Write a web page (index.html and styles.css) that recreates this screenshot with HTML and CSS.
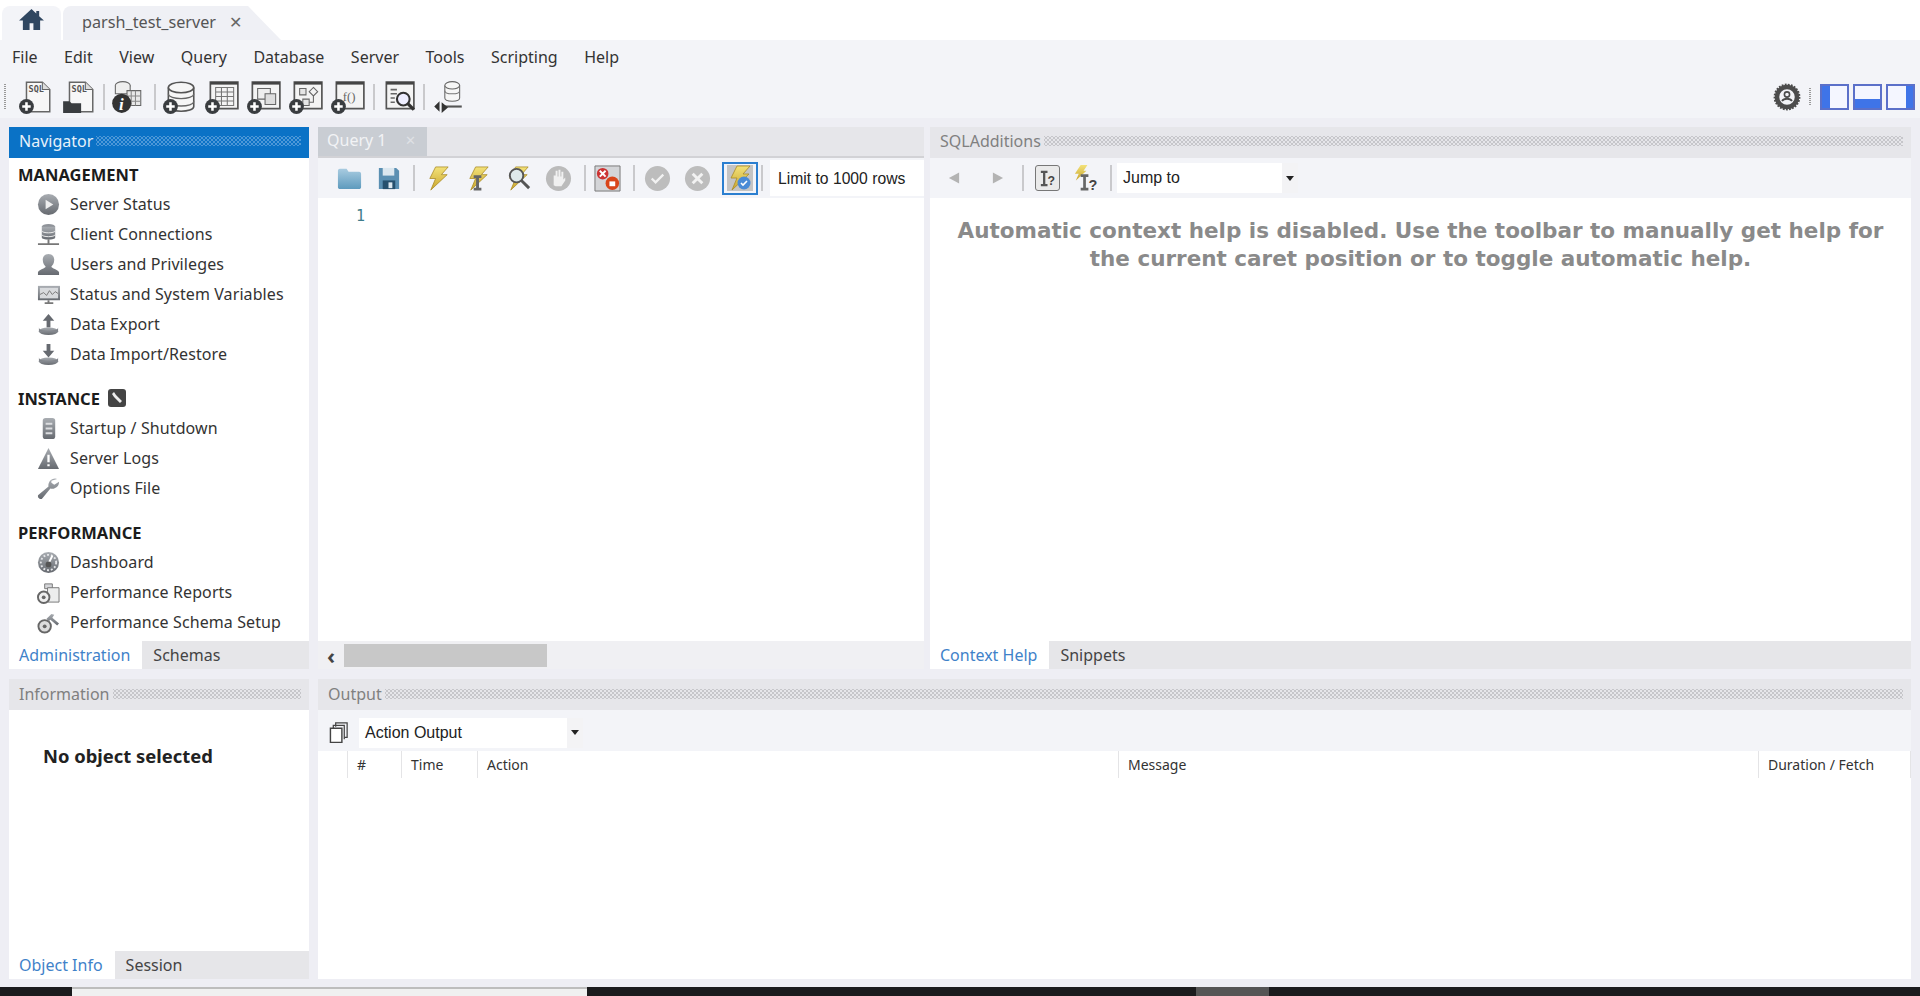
FILE: index.html
```html
<!DOCTYPE html>
<html lang="en">
<head>
<meta charset="utf-8">
<title>MySQL Workbench</title>
<link rel="stylesheet" href="styles.css">
</head>
<body>
<svg class="defs" aria-hidden="true">
  <defs>
    <linearGradient id="g" x1="0" y1="0" x2="0" y2="1"><stop offset="0" stop-color="#a9adb2"/><stop offset="1" stop-color="#666a70"/></linearGradient>
    <linearGradient id="bolt" x1="0" y1="0" x2="0" y2="1"><stop offset="0" stop-color="#f3e27a"/><stop offset="1" stop-color="#c9a52c"/></linearGradient>
    <linearGradient id="folder" x1="0" y1="0" x2="0" y2="1"><stop offset="0" stop-color="#a8cbe0"/><stop offset="1" stop-color="#5d9abd"/></linearGradient>
    <symbol id="plus" viewBox="0 0 34 34"><circle cx="8" cy="26" r="7" fill="#3a3d40"/><path d="M4 26h8M8 22v8" stroke="#fff" stroke-width="2.4"/></symbol>
    <symbol id="win" viewBox="0 0 34 34"><path d="M6 3h26v25H6z" fill="#f4f4f4" stroke="#555" stroke-width="1.6"/><path d="M6 4h26" stroke="#444" stroke-width="2.6"/></symbol>
    <symbol id="bolt-shape" viewBox="0 0 28 28"><path d="M11 2h13l-7 8h6L6 26l5-12H5z" fill="url(#bolt)" stroke="#a98a25" stroke-width=".8"/></symbol>
  </defs>
</svg>

<header class="tabbar">
  <div class="home-tab">
    <svg class="home-icon" viewBox="0 0 28 24"><path d="M14 1 1 13h4v10h7v-7h4v7h7V13h4l-5-4.5V3h-3v2.8z" fill="#304761"/></svg>
  </div>
  <div class="conn-tab"><span>parsh_test_server</span><span class="conn-close">✕</span></div>
</header>

<nav class="menubar">
  <span>File</span><span>Edit</span><span>View</span><span>Query</span><span>Database</span><span>Server</span><span>Tools</span><span>Scripting</span><span>Help</span>
</nav>

<div class="toolbar">
  <i class="grip"></i>
  <span class="tool first">
    <svg viewBox="0 0 34 34"><path d="M8 3h15l7 7v21H8z" fill="#f7f7f7" stroke="#666" stroke-width="1.4"/><path d="M23 3v7h7" fill="#ddd" stroke="#666"/><text x="10" y="12" class="svg-sql">SQL</text><use href="#plus"/></svg>
  </span>
  <span class="tool m1">
    <svg viewBox="0 0 34 34"><path d="M8 3h15l7 7v21H8z" fill="#f7f7f7" stroke="#666" stroke-width="1.4"/><path d="M23 3v7h7" fill="#ddd" stroke="#666"/><text x="10" y="12" class="svg-sql">SQL</text><path d="M2 32V21h6l2 2h9v9z" fill="#3a3d40"/></svg>
  </span>
  <i class="sep m3"></i>
  <span class="tool m1">
    <svg viewBox="0 0 34 34"><ellipse cx="13" cy="6" rx="7" ry="3.5" fill="#eee" stroke="#666"/><path d="M6 6v8h14V6" fill="#eee" stroke="#666"/><path d="M17 11h13v14H17z" fill="#e8e8e8" stroke="#666"/><path d="M21 11v14M25 11v14M17 16h13M17 21h13" stroke="#888"/><circle cx="12" cy="23" r="9" fill="#333"/><text x="9.5" y="29" class="svg-i">i</text></svg>
  </span>
  <i class="sep m6"></i>
  <span class="tool m3">
    <svg viewBox="0 0 34 34"><path d="M6 8v18c0 6 24 6 24 0V8" fill="#f6f6f6" stroke="#555" stroke-width="1.5"/><ellipse cx="18" cy="8" rx="12" ry="5" fill="#f6f6f6" stroke="#555" stroke-width="1.5"/><path d="M6 14c0 6 24 6 24 0M6 21c0 6 24 6 24 0" fill="none" stroke="#666" stroke-width="1.2"/><use href="#plus"/></svg>
  </span>
  <span class="tool">
    <svg viewBox="0 0 34 34"><use href="#win"/><path d="M11 8h17v17H11zM11 12.200h17M11 16.500h17M11 20.700h17M16.500 8v17M22 8v17" fill="none" stroke="#777"/><use href="#plus"/></svg>
  </span>
  <span class="tool">
    <svg viewBox="0 0 34 34"><use href="#win"/><path d="M11 9h12v10H11z" fill="#eee" stroke="#666"/><path d="M18 14h10v10H18z" fill="#ddd" stroke="#666"/><use href="#plus"/></svg>
  </span>
  <span class="tool">
    <svg viewBox="0 0 34 34"><use href="#win"/><path d="M11 9h6v6h-6zM14 19h6v6h-6z" fill="#e6e6e6" stroke="#666"/><path d="m24 8 4 4-4 4-4-4zM24 16v6h-4" fill="none" stroke="#666"/><use href="#plus"/></svg>
  </span>
  <span class="tool">
    <svg viewBox="0 0 34 34"><use href="#win"/><text x="12" y="21" class="svg-fn">f()</text><use href="#plus"/></svg>
  </span>
  <i class="sep m4"></i>
  <span class="tool m2">
    <svg viewBox="0 0 34 34"><use href="#win"/><path d="M10 10h6M10 14h6M10 18h4M10 22h4" stroke="#666" stroke-width="1.5"/><circle cx="22" cy="19" r="6" fill="#eef" stroke="#333" stroke-width="2"/><path d="m26 23 6 6" stroke="#333" stroke-width="3"/></svg>
  </span>
  <i class="sep m4"></i>
  <span class="tool m2">
    <svg viewBox="0 0 34 34"><path d="M14 6v12c0 4 14 4 14 0V6" fill="#f6f6f6" stroke="#666"/><ellipse cx="21" cy="6" rx="7" ry="3.500" fill="#f6f6f6" stroke="#666"/><path d="M14 11c0 4 14 4 14 0" fill="none" stroke="#777"/><path d="M14 26h16" stroke="#555" stroke-width="2"/><path d="m9 21-5 5 5 5zM11 22l6 5-6 5z" fill="#333"/></svg>
  </span>
  <div class="toolbar-right">
    <svg class="gear" viewBox="0 0 28 28"><circle cx="14" cy="14" r="10" fill="none" stroke="#4c4c4c" stroke-width="4.500"/><circle cx="14" cy="14" r="12.400" fill="none" stroke="#4c4c4c" stroke-width="2" stroke-dasharray="1.800 1.300"/><circle cx="14" cy="11.500" r="2.600" fill="none" stroke="#4c4c4c" stroke-width="1.600"/><path d="M9 18c2-3 8-3 10 0" fill="none" stroke="#4c4c4c" stroke-width="1.800"/></svg>
    <i class="grip small"></i>
    <span class="pane pane-left"></span><span class="pane pane-bottom"></span><span class="pane pane-right"></span>
  </div>
</div>

<main class="workspace">
  <section class="panel nav-panel">
    <h2 class="panel-head active"><span>Navigator</span><i class="dots"></i></h2>
    <div class="nav-body">
      <h3 class="nav-title">MANAGEMENT</h3>
      <ul class="nav-list">
        <li><svg viewBox="0 0 24 24"><circle cx="12" cy="12" r="11" fill="url(#g)"/><path d="M9 7v10l8-5z" fill="#eee"/></svg>Server Status</li>
        <li><svg viewBox="0 0 24 24"><ellipse cx="12" cy="4" rx="7" ry="3" fill="#8f9399"/><path d="M5 4v11c0 3 14 3 14 0V4" fill="url(#g)"/><path d="M5 8c0 3 14 3 14 0M5 12c0 3 14 3 14 0" fill="none" stroke="#eee"/><path d="M1 22h22M12 17v5" stroke="#777" stroke-width="2"/></svg>Client Connections</li>
        <li><svg viewBox="0 0 24 24"><path d="M12 1c4 0 6 3 6 6 0 4-2 6-3 7 0 2 7 3 8 6v3H1v-3c1-3 8-4 8-6-1-1-3-3-3-7 0-3 2-6 6-6z" fill="url(#g)"/></svg>Users and Privileges</li>
        <li><svg viewBox="0 0 24 24"><path d="M1 3h23v15H1z" fill="url(#g)"/><path d="M3 5h19v11H3z" fill="#d8dadd"/><path d="m3 12 4-2 3 3 3-5 3 4 3-3 3 2" fill="none" stroke="#777"/><path d="M8 21h9M12 18v3" stroke="#777" stroke-width="2"/></svg>Status and System Variables</li>
        <li><svg viewBox="0 0 24 24"><path d="M12 1 6 8h4v7h4V8h4z" fill="#666a70"/><ellipse cx="12" cy="19" rx="10" ry="4" fill="url(#g)"/><path d="M2 15v4h20v-4c0 5-20 5-20 0z" fill="#80848a"/></svg>Data Export</li>
        <li><svg viewBox="0 0 24 24"><path d="M12 15 6 8h4V1h4v7h4z" fill="#666a70"/><ellipse cx="12" cy="19" rx="10" ry="4" fill="url(#g)"/><path d="M2 15v4h20v-4c0 5-20 5-20 0z" fill="#80848a"/></svg>Data Import/Restore</li>
      </ul>
      <h3 class="nav-title">INSTANCE <svg class="title-icon" viewBox="0 0 18 18"><rect width="18" height="18" rx="3" fill="#444"/><path d="M4 5l2-2 2 3 6 6-2 2-6-6z" fill="#eee"/></svg></h3>
      <ul class="nav-list">
        <li><svg viewBox="0 0 24 24"><rect x="6" y="1" width="13" height="22" rx="3" fill="url(#g)"/><path d="M9 7h7M9 12h7M9 17h7" stroke="#dcdde0" stroke-width="2"/></svg>Startup / Shutdown</li>
        <li><svg viewBox="0 0 24 24"><path d="M12 1 23 23H1z" fill="url(#g)"/><path d="M12 8v8M12 18v2" stroke="#fff" stroke-width="2.400"/></svg>Server Logs</li>
        <li><svg viewBox="0 0 24 24"><path d="M21 2a7 7 0 0 0-9 8L1 19v2l2 2h2l9-11a7 7 0 0 0 9-7l-5 3-3-2v-2z" fill="url(#g)"/></svg>Options File</li>
      </ul>
      <h3 class="nav-title">PERFORMANCE</h3>
      <ul class="nav-list">
        <li><svg viewBox="0 0 24 24"><circle cx="12" cy="12" r="11" fill="url(#g)"/><circle cx="12" cy="12" r="8" fill="none" stroke="#e4e5e8" stroke-width="2" stroke-dasharray="2 2"/><path d="M12 13 16 5" stroke="#fff" stroke-width="2"/><circle cx="12" cy="14" r="3" fill="#555"/></svg>Dashboard</li>
        <li><svg viewBox="0 0 24 24"><path d="M8 3h8v5H8z" fill="#d5d6d9" stroke="#777"/><path d="M11 7h12v15H11z" fill="#eceded" stroke="#777"/><circle cx="7" cy="17" r="6" fill="#eee" stroke="#666" stroke-width="2"/><circle cx="7" cy="17" r="2" fill="#666"/></svg>Performance Reports</li>
        <li><svg viewBox="0 0 24 24"><circle cx="8" cy="16" r="6.500" fill="#ddd" stroke="#666" stroke-width="2"/><circle cx="8" cy="16" r="2" fill="#666"/><path d="m10 8 5-5 3 1-2 3 7 6-2 2-7-6-2 2z" fill="url(#g)"/></svg>Performance Schema Setup</li>
      </ul>
    </div>
    <div class="bottom-tabs"><span class="tab-on">Administration</span><span class="tab-off">Schemas</span></div>
  </section>

  <section class="panel query-panel">
    <div class="query-tabs"><span class="query-tab">Query 1<b>✕</b></span></div>
    <div class="query-tools">
      <span class="qt first-q"><svg viewBox="0 0 28 28"><path d="M2 6c0-1 1-2 2-2h7l2 3h11c1 0 2 1 2 2v14c0 1-1 2-2 2H4c-1 0-2-1-2-2z" fill="url(#folder)"/></svg></span>
      <span class="qt"><svg viewBox="0 0 28 28"><path d="M4 3h18l3 3v19H4z" fill="#5a8fb2"/><path d="M8 3h12v8H8z" fill="#dbe7ef"/><path d="M8 16h13v9H8z" fill="#26506e"/><path d="M14 18h4v6h-4z" fill="#dbe7ef"/></svg></span>
      <i class="sep m5"></i>
      <span class="qt m3"><svg viewBox="0 0 28 28"><use href="#bolt-shape"/></svg></span>
      <span class="qt"><svg viewBox="0 0 28 28"><use href="#bolt-shape"/><path d="M9 12h8M9 25h8M13 12v13" stroke="#666" stroke-width="3"/></svg></span>
      <span class="qt"><svg viewBox="0 0 28 28"><use href="#bolt-shape"/><circle cx="12" cy="11" r="7" fill="#dfe9ea" stroke="#555" stroke-width="2"/><path d="m17 16 8 8" stroke="#555" stroke-width="3"/></svg></span>
      <span class="qt"><svg viewBox="0 0 28 28"><circle cx="14" cy="14" r="13" fill="#bbb"/><path d="M9 21V11h2V6h2v6h1V5h2v7h1V7h2v8l2-2v3l-4 6H11z" fill="#f0f0f0"/></svg></span>
      <i class="sep m6"></i>
      <span class="qt m1"><svg viewBox="0 0 28 28"><path d="M1 1h26v26H1z" fill="#d4d5d8" stroke="#777"/><circle cx="9" cy="9" r="6" fill="#c33"/><path d="m6 6 6 6m0-6-6 6" stroke="#fff" stroke-width="2"/><circle cx="19" cy="19" r="7" fill="#d9451a"/><path d="M16 22v-5h6v5z" fill="#fff"/></svg></span>
      <i class="sep m6"></i>
      <span class="qt m2"><svg viewBox="0 0 28 28"><circle cx="14" cy="14" r="13" fill="#bdbdbd"/><path d="m8 14 4 4 8-8" fill="none" stroke="#f2f2f2" stroke-width="2.400"/></svg></span>
      <span class="qt"><svg viewBox="0 0 28 28"><circle cx="14" cy="14" r="13" fill="#bdbdbd"/><path d="m9 9 10 10m0-10L9 19" stroke="#f2f2f2" stroke-width="3"/></svg></span>
      <span class="qt-on"><svg viewBox="0 0 28 28"><path d="M1 1h26v26H1z" fill="#c4c4c4"/><use href="#bolt-shape"/><circle cx="18" cy="19" r="6.500" fill="#4a8bd6"/><path d="m15 19 2 2 4-4" fill="none" stroke="#fff" stroke-width="1.600"/></svg></span>
      <i class="sep m3"></i>
      <span class="limit">Limit to 1000 rows</span>
    </div>
    <div class="editor"><span class="lineno">1</span></div>
    <div class="hscroll"><span class="hscroll-arrow">‹</span><span class="hscroll-thumb"></span></div>
  </section>

  <section class="panel add-panel">
    <h2 class="panel-head"><span>SQLAdditions</span><i class="dots"></i></h2>
    <div class="add-tools">
      <svg class="arrow" viewBox="0 0 14 14"><path d="M12 1v12L1 7z" fill="#b3b3b3"/></svg>
      <svg class="arrow gap-arrow" viewBox="0 0 14 14"><path d="M2 1v12l11-6z" fill="#b3b3b3"/></svg>
      <i class="sep m-sep"></i>
      <span class="help-on"><svg viewBox="0 0 20 20"><path d="M3 3h7M3 17h7M6.500 3v14" stroke="#555" stroke-width="2.400"/><text x="10" y="17" class="svg-q">?</text></svg></span>
      <span class="help-off"><svg viewBox="0 0 28 28"><path d="M9 0h7l-4 6h3L4 16l3-7H3z" fill="url(#bolt)"/><path d="M9 11h8M9 25h8M13 11v14" stroke="#666" stroke-width="2.800"/><text x="17" y="26" class="svg-q2">?</text></svg></span>
      <i class="sep m-sep2"></i>
      <div class="combo jump"><span>Jump to</span><i class="combo-btn"></i></div>
    </div>
    <div class="help-body"><p>Automatic context help is disabled. Use the toolbar to manually get help for<br>the current caret position or to toggle automatic help.</p></div>
    <div class="bottom-tabs"><span class="tab-on">Context Help</span><span class="tab-off">Snippets</span></div>
  </section>

  <section class="panel info-panel">
    <h2 class="panel-head"><span>Information</span><i class="dots"></i></h2>
    <div class="info-body"><p>No object selected</p></div>
    <div class="bottom-tabs"><span class="tab-on">Object Info</span><span class="tab-off">Session</span></div>
  </section>

  <section class="panel output-panel">
    <h2 class="panel-head"><span>Output</span><i class="dots"></i></h2>
    <div class="out-tools">
      <svg class="copy-icon" viewBox="0 0 22 22"><path d="M7 5V1h12v15h-3" fill="none" stroke="#444" stroke-width="1.300"/><path d="M4.500 7V3.500H16V18" fill="none" stroke="#444" stroke-width="1.300"/><path d="M1.500 6.500h12v15h-12z" fill="#fff" stroke="#444" stroke-width="1.500"/></svg>
      <div class="combo action"><span>Action Output</span><i class="combo-btn"></i></div>
    </div>
    <div class="out-head">
      <span class="col c0"></span><span class="col c1">#</span><span class="col c2">Time</span><span class="col c3">Action</span><span class="col c4">Message</span><span class="col c5">Duration / Fetch</span>
    </div>
    <div class="out-body"></div>
  </section>
</main>

<footer class="taskbar"><span class="task-box"></span><span class="task-seg"></span></footer>
</body>
</html>
```

FILE: styles.css
```css
* { box-sizing: border-box; }
html, body { margin: 0; height: 100%; }
body {
  width: 1920px; height: 996px; overflow: hidden;
  display: flex; flex-direction: column;
  font-family: "Noto Sans", "Open Sans", sans-serif;
  font-size: 15px; color: #2a2a2a; background: #fff;
}
.defs { display: block; width: 0; height: 0; }
ul { list-style: none; margin: 0; padding: 0; }
h2, h3, p { margin: 0; }
i { font-style: normal; }

.tabbar { height: 40px; display: flex; align-items: flex-end; padding-left: 2px; background: #fff; flex: none; }
.home-tab { width: 59px; height: 34px; background: #f3f4f8; border-radius: 8px 8px 0 0; display: flex; align-items: center; justify-content: center; }
.home-icon { width: 27px; height: 23px; margin-bottom: 8px; }
.conn-tab {
  width: 218px; height: 34px; margin-left: 2px; padding-left: 19px; padding-bottom: 2px;
  background: #eff0f5; clip-path: polygon(0 0, 185px 0, 100% 100%, 0 100%);
  border-radius: 8px 0 0 0;
  display: flex; align-items: center; gap: 13px; font-size: 16.200px; color: #555;
}
.conn-close { font-size: 16px; color: #666; }

.menubar { height: 36px; flex: none; display: flex; align-items: center; padding: 0 0 2px 12px; background: #f3f4f8; font-size: 16px; color: #333; }
.menubar span { margin-right: 26.500px; }

.toolbar { height: 42px; flex: none; display: flex; align-items: center; padding-left: 4px; background: #f3f4f8; }
.grip { width: 2px; height: 26px; margin-right: 9px; background: repeating-linear-gradient(#999 0 1px, transparent 1px 2px); }
.grip.small { height: 18px; margin: 0 5px 0 4px; }
.tool { width: 42px; height: 36px; display: flex; align-items: center; justify-content: center; }
.tool svg { width: 36px; height: 36px; }
.sep { width: 2px; height: 26px; background: #c9c9cc; flex: none; }
.m1 { margin-left: 1px; } .m2 { margin-left: 2px; } .m3 { margin-left: 3px; }
.m4 { margin-left: 4px; } .m5 { margin-left: 5px; } .m6 { margin-left: 6px; }
.svg-sql { font: bold 8px "DejaVu Sans Mono", monospace; fill: #555; }
.svg-i { font: italic bold 16px "Liberation Serif", serif; fill: #fff; }
.svg-fn { font: 12px "Liberation Serif", serif; fill: #666; }
.svg-q { font: bold 13px "Liberation Sans", sans-serif; fill: #444; }
.svg-q2 { font: bold 15px "Liberation Sans", sans-serif; fill: #444; }
.toolbar-right { margin-left: auto; display: flex; align-items: center; padding-right: 5px; gap: 4px; }
.gear { width: 28px; height: 28px; }
.pane { width: 29px; height: 26px; border: 2px solid #5b70c9; background: #f4f6ff; display: block; }
.pane-left { background: linear-gradient(90deg, #3f74e8 30%, #f4f6ff 30%); }
.pane-bottom { background: linear-gradient(#f4f6ff 60%, #3f74e8 60%); }
.pane-right { background: linear-gradient(90deg, #f4f6ff 70%, #3f74e8 70%); }

.workspace {
  flex: 1; min-height: 0; background: #eeeef4; padding: 9px 9px 8px 9px;
  display: grid; grid-template-columns: 300px 606px 981px; column-gap: 9px; row-gap: 10px;
  grid-template-rows: 542px 300px; grid-template-areas: "nav query add" "info out out";
}
.add-panel { margin-left: -3px; width: 981px; }
.nav-panel { grid-area: nav; }
.query-panel { grid-area: query; }
.add-panel { grid-area: add; }
.info-panel { grid-area: info; }
.output-panel { grid-area: out; width: 1593px; }
.panel { display: flex; flex-direction: column; min-width: 0; min-height: 0; background: #fff; }

.panel-head { height: 31px; flex: none; display: flex; align-items: center; gap: 3px; padding: 0 8px 3px 10px; background: #e6e6ea; font-weight: 400; font-size: 16px; color: #808080; }
.info-panel .panel-head, .output-panel .panel-head { padding-bottom: 1px; }
.panel-head.active { background: #0a72c6; color: #e6f1fa; }
.dots { flex: 1; height: 10px; background-image: radial-gradient(circle, #c6c6ca .8px, transparent 1px), radial-gradient(circle, #c6c6ca .8px, transparent 1px); background-size: 4px 4px; background-position: 0 0, 2px 2px; }
.panel-head.active .dots { background-image: radial-gradient(circle, #4d98d8 .8px, transparent 1px), radial-gradient(circle, #4d98d8 .8px, transparent 1px); }

.nav-body { flex: 1; min-height: 0; padding: 1px 0 0 9px; }
.nav-title { height: 30px; display: flex; align-items: center; gap: 8px; font-size: 16.500px; font-weight: 700; color: #1c1c1c; }
.nav-list { margin-bottom: 14px; }
.nav-list li { height: 30px; display: flex; align-items: center; padding-left: 19px; gap: 10px; font-size: 16px; letter-spacing: .1px; color: #333; }
.nav-list svg { width: 23px; height: 23px; flex: none; }
.title-icon { width: 18px; height: 18px; }

.bottom-tabs { height: 28px; flex: none; display: flex; background: #e6e6e9; font-size: 16px; color: #444; }
.bottom-tabs span { display: flex; align-items: center; }
.tab-on { background: #fff; color: #3f82c9; padding: 0 12px 0 10px; }
.tab-off { padding: 0 11px; }

.query-tabs { height: 31px; flex: none; display: flex; background: #e6e6ea; border-bottom: 2px solid #d2d2d6; }
.query-tab { width: 109px; background: #c9cdd3; color: #f2f3f5; font-size: 16px; padding: 0 0 3px 9px; display: flex; align-items: center; gap: 18px; }
.query-tab b { font-weight: 400; font-size: 13px; color: #dfe1e5; }
.query-tools { height: 40px; flex: none; display: flex; align-items: center; background: #f3f4f8; }
.qt { width: 40px; height: 30px; display: flex; align-items: center; justify-content: center; }
.qt svg { width: 27px; height: 27px; }
.first-q { margin: 0 -1px 0 11px; }
.qt-on { width: 36px; height: 33px; margin-left: 5px; border: 2px solid #2b7fd0; display: flex; align-items: center; justify-content: center; }
.qt-on svg { width: 28px; height: 28px; }
.limit { flex: 1; height: 36px; margin-left: 7px; padding: 2px 0 0 8px; background: #fff; font-family: "Liberation Sans", sans-serif; font-size: 15.700px; display: flex; align-items: center; color: #222; }
.editor { flex: 1; padding: 7px 0 0 38px; background: #fff; }
.lineno { font-family: "DejaVu Sans Mono", monospace; font-size: 15px; color: #3f7d8c; }
.hscroll { height: 28px; flex: none; display: flex; align-items: center; background: #f0f0f3; }
.hscroll-arrow { width: 26px; text-align: center; font-size: 22px; line-height: 20px; font-weight: 700; color: #444; }
.hscroll-thumb { width: 203px; height: 23px; background: #c8c8c8; }

.add-tools { height: 40px; flex: none; display: flex; align-items: center; background: #f3f4f8; padding-left: 18px; }
.arrow { width: 13px; height: 14px; flex: none; }
.gap-arrow { margin-left: 30px; }
.m-sep { margin-left: 18px; }
.m-sep2 { margin-left: 6px; }
.help-on { width: 25px; height: 26px; margin-left: 11px; border: 1.500px solid #777; border-radius: 3px; background: #eaeaea; display: flex; align-items: center; justify-content: center; }
.help-on svg { width: 19px; height: 19px; }
.help-off { width: 32px; margin-left: 12px; display: flex; align-items: center; }
.help-off svg { width: 27px; height: 27px; }
.combo { height: 30px; background: #fff; display: flex; align-items: center; justify-content: space-between; font-family: "Liberation Sans", sans-serif; font-size: 16px; color: #222; }
.jump { width: 181px; margin-left: 5px; padding-left: 6px; }
.action { width: 224px; margin-left: 9px; padding-left: 6px; }
.combo-btn { width: 16px; height: 100%; background: #f3f3f5; display: flex; align-items: center; justify-content: center; }
.combo-btn::before { content: ""; border: 4px solid transparent; border-top: 5px solid #222; border-bottom: 0; }
.help-body { flex: 1; padding-top: 19px; background: #fff; }
.help-body p { text-align: center; font-family: "DejaVu Sans", sans-serif; font-weight: 700; font-size: 21.500px; line-height: 28px; color: #8a8a8a; }

.info-body { flex: 1; min-height: 0; background: #fff; padding: 33px 0 0 34px; }
.info-body p { font-size: 18.400px; font-weight: 700; color: #222; }

.out-tools { height: 41px; flex: none; display: flex; align-items: center; background: #f3f4f8; padding: 4px 0 0 11px; }
.copy-icon { width: 21px; height: 21px; flex: none; }
.out-head { height: 27px; flex: none; display: flex; background: #fff; font-size: 14px; color: #333; }
.col { display: flex; align-items: center; padding-left: 9px; border-right: 1px solid #e4e4e6; height: 100%; }
.c0 { width: 30px; }
.c1 { width: 54px; }
.c2 { width: 76px; }
.c3 { width: 641px; }
.c4 { width: 640px; }
.c5 { width: 152px; }
.out-body { flex: 1; background: #fff; }

.taskbar { height: 9px; flex: none; display: flex; background: #1b1b1d; padding-left: 72px; }
.task-box { width: 515px; height: 9px; background: #f0f0f0; border-top: 2px solid #bdbdbd; }
.task-seg { width: 73px; height: 9px; margin-left: 609px; background: #555; }
```
